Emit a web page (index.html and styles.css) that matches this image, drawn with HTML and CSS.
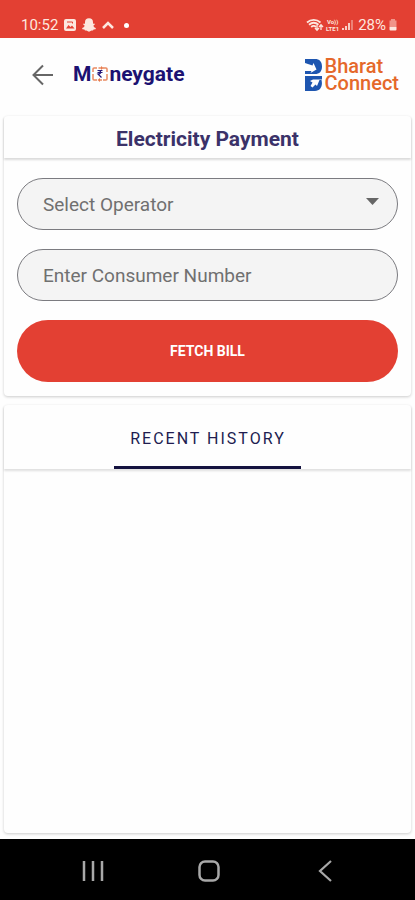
FILE: index.html
```html
<!DOCTYPE html>
<html lang="en">
<head>
<meta charset="utf-8">
<meta name="viewport" content="width=device-width, initial-scale=1">
<title>Electricity Payment</title>
<link rel="stylesheet" href="styles.css">
</head>
<body>
<div class="status">
  <div class="status-group">
    <span class="clock">10:52</span>
    <svg width="14" height="14" viewBox="0 0 14 14"><rect x="1" y="1" width="12" height="12" rx="2" fill="currentColor"/><path d="M3 10.500l2.500-3.500 2 2 1.500-1.500 2.500 3z" fill="#e34033"/><path d="M4 4h5.500v1.500" fill="none" stroke="#e34033"/></svg>
    <svg width="14" height="14" viewBox="0 0 14 14"><path d="M7 .3c2.600 0 4 1.600 4 3.900v1.500l1.400-.2.400 1-1.500 1.200c.5 1.200 1.300 1.800 2.600 2.300l-.4 1.200-1.900.4-.6.900-1.400-.1L7 13.800l-2.600-1.400-1.400.1-.6-.9-1.900-.4-.4-1.200c1.300-.5 2.100-1.100 2.600-2.300L1.200 6.500l.4-1 1.400.2V4.200C3 1.900 4.400.3 7 .3z" fill="currentColor"/></svg>
    <svg class="caret-icon" width="14" height="14" viewBox="0 0 14 14"><path d="M2 10l5-5 5 5" fill="none" stroke="currentColor" stroke-width="2.500"/></svg>
    <span class="dot"></span>
  </div>
  <div class="status-group status-right">
    <svg width="18" height="14" viewBox="0 0 18 14"><path d="M1 4.500c4-3.500 9.500-3.500 13.500 0M3 6.800c3-2.600 6.500-2.600 9.500 0M5.200 9c1.600-1.400 3.400-1.400 4.800 0" fill="none" stroke="currentColor" stroke-width="1.800"/><path d="M11 7v5M9 10l2 2.200 2-2.200M15 12V7M13 9l2-2.200L17 9" fill="none" stroke="currentColor" stroke-width="1.300"/></svg>
    <span class="volte"><span>Vo))</span><span>LTE1</span></span>
    <svg width="13" height="14" viewBox="0 0 13 14"><path d="M1 10h2v2H1zM4 8h2v4H4zM7 5h2v7H7z" fill="currentColor" opacity=".85"/><path d="M10 2h2v10h-2z" fill="currentColor" opacity=".4"/></svg>
    <span class="battery-text">28%</span>
    <svg width="10" height="14" viewBox="0 0 10 14"><path d="M3 1h4v1.500h1.500V9h-7V2.500H3z" fill="currentColor" opacity=".5"/><path d="M1.500 9h7v2.500q0 1-1 1h-5q-1 0-1-1z" fill="currentColor"/></svg>
  </div>
</div>
<header class="appbar">
  <button class="back" type="button" aria-label="Back"><svg width="22" height="22" viewBox="0 0 22 22"><path d="M21 11H2M11 1.500L1.500 11l9.500 9.500" fill="none" stroke="currentColor" stroke-width="2"/></svg></button>
  <div class="brand"><span>M</span><svg width="18" height="18" viewBox="0 0 18 18"><path d="M6 3H3q-1 0-1 1v3M2 9v5q0 1 1 1h3M12 3h3q1 0 1 1v3M16 9v5q0 1-1 1h-3M7.500 3h3M8 15h3" fill="none" stroke="#e98a62" stroke-width="1.500"/><path d="M10 1l2.500 2L10 5zM9 13l-2.500 2L9 17z" fill="#e87b4d"/><path d="M6.500 5.500h5M6.500 7.500h5M7 5.500c3.500 0 3.500 3.500 0 3.500l3.500 3.500" fill="none" stroke="#24187a" stroke-width="1.200"/></svg><span>neygate</span></div>
  <div class="bharat">
    <svg width="17" height="32" viewBox="0 0 17 32"><path d="M0 0h10c4.500 0 7 2.500 7 7.500S14.500 15 10 15H0v-3h6.500l-1 2 6-3.500-3-6.500-1 2.500L0 4z" fill="#1e56b0"/><path d="M0 17h17v3.500H8L5 22l2.500 1.500L5.500 27l2 1.500 3-3 1.500 1.500 2.500-6h2c1.500 6-1 11-6.500 11H0z" fill="#1e56b0"/></svg>
    <div class="bharat-name"><span>Bharat</span><span>Connect</span></div>
  </div>
</header>
<main>
  <form class="card">
    <h1>Electricity Payment</h1>
    <div class="fields">
      <div class="select-wrap">
        <select aria-label="Select Operator"><option>Select Operator</option></select>
        <svg class="arrow" width="13" height="7" viewBox="0 0 13 7"><path d="M0 0h13L6.500 7z" fill="#666"/></svg>
      </div>
      <input type="text" placeholder="Enter Consumer Number" aria-label="Enter Consumer Number">
      <button class="fetch" type="button">FETCH BILL</button>
    </div>
  </form>
  <section class="card history">
    <div class="tabs"><button class="tab" type="button">RECENT HISTORY</button></div>
  </section>
</main>
<nav class="navbar">
  <button type="button" aria-label="Recent apps"><svg width="22" height="22" viewBox="0 0 22 22"><path d="M2 1v20M11 1v20M20 1v20" stroke="currentColor" stroke-width="2.500"/></svg></button>
  <button type="button" aria-label="Home"><svg width="22" height="22" viewBox="0 0 22 22"><rect x="1.500" y="1.500" width="19" height="19" rx="5.500" fill="none" stroke="currentColor" stroke-width="2.500"/></svg></button>
  <button type="button" aria-label="Back"><svg width="22" height="22" viewBox="0 0 22 22"><path d="M17 1L6 11l11 10" fill="none" stroke="currentColor" stroke-width="2.200"/></svg></button>
</nav>
</body>
</html>
```
FILE: styles.css
```css
* { box-sizing: border-box; }
body {
  margin: 0;
  min-height: 100vh;
  display: flex;
  flex-direction: column;
  background: #fefefe;
  font-family: Roboto, "Liberation Sans", sans-serif;
}
svg { display: block; flex: none; }
button, input, select { font-family: inherit; margin: 0; }
button { border: 0; padding: 0; background: none; color: inherit; }
.status {
  height: 38px;
  padding: 12px 17px 0 21px;
  display: flex;
  justify-content: space-between;
  background: #e34033;
  color: #fde7df;
}
.status-group { display: flex; align-items: center; gap: 5px; }
.status-right { gap: 2px; }
.clock { font-size: 15px; }
.battery-text { font-size: 15px; margin-left: 2px; }
.caret-icon { margin-right: 4px; }
.dot { width: 5px; height: 5px; border-radius: 50%; background: #fff; }
.volte {
  display: flex;
  flex-direction: column;
  align-items: center;
  font-size: 6px;
  line-height: 7px;
  font-weight: 700;
}
.appbar {
  height: 78px;
  padding: 0 16px 4px 32px;
  display: flex;
  align-items: center;
}
.back { color: #666; }
.brand {
  margin-left: 19px;
  padding-bottom: 2px;
  display: flex;
  align-items: center;
  font-size: 21px;
  font-weight: 700;
  color: #1c1272;
}
.bharat { margin-left: auto; display: flex; align-items: center; gap: 3px; }
.bharat-name {
  display: flex;
  flex-direction: column;
  font-size: 20px;
  line-height: 17px;
  font-weight: 500;
  color: #e5682a;
}
main {
  flex: 1;
  display: flex;
  flex-direction: column;
  gap: 9px;
  padding: 0 4px 6px;
}
.card {
  background: #fefefe;
  border-radius: 4px;
  box-shadow: 0 1px 3px rgba(0, 0, 0, .2);
}
h1 {
  margin: 0;
  padding: 9px 0 5px;
  font-size: 21px;
  line-height: 28px;
  font-weight: 700;
  text-align: center;
  color: #3b3269;
  box-shadow: 0 2px 2px rgba(0, 0, 0, .14);
}
.fields {
  display: flex;
  flex-direction: column;
  gap: 19px;
  padding: 20px 13px 14px;
}
.select-wrap { position: relative; }
select, input {
  display: block;
  width: 100%;
  height: 52px;
  padding: 0 25px;
  border: 1px solid #7b7b80;
  border-radius: 26px;
  background: #f4f4f4;
  color: #707070;
  font-size: 19px;
  outline: 0;
}
select { appearance: none; }
input::placeholder { color: #707070; opacity: 1; }
.arrow { position: absolute; right: 19px; top: 20px; }
.fetch {
  height: 62px;
  border-radius: 31px;
  background: #e34033;
  color: #fff;
  font-size: 14px;
  font-weight: 700;
}
.history { flex: 1; }
.tabs {
  display: flex;
  justify-content: center;
  box-shadow: 0 2px 2px rgba(0, 0, 0, .12);
}
.tab {
  height: 64px;
  padding: 5px 15px 0 16px;
  border-bottom: 3px solid #14123f;
  color: #201c50;
  font-size: 16px;
  letter-spacing: 2px;
}
.navbar {
  height: 61px;
  padding: 3px 68px 0 71px;
  display: flex;
  justify-content: space-between;
  align-items: center;
  background: #000;
  color: #a8a8a8;
}
.navbar button { width: 44px; display: flex; justify-content: center; }
```
